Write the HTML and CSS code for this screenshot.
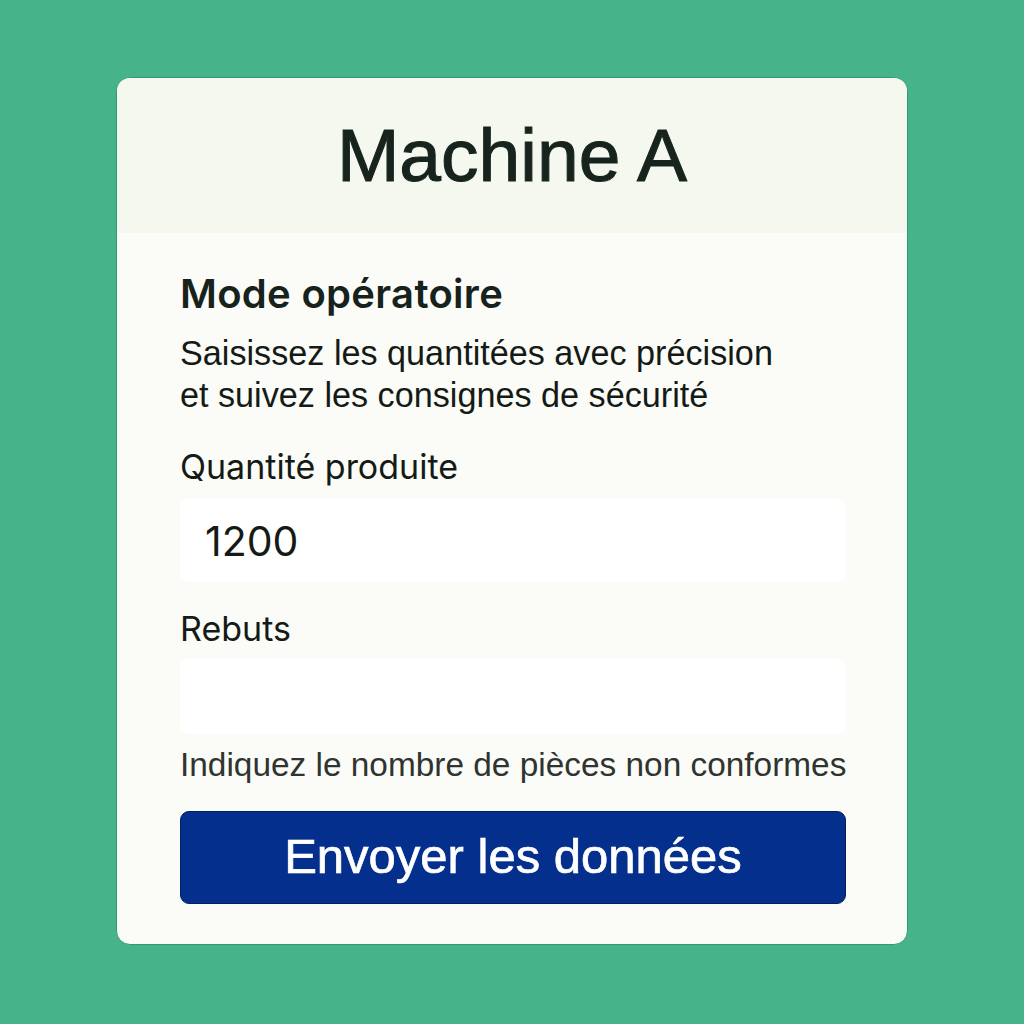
FILE: index.html
```html
<!DOCTYPE html>
<html lang="fr">
<head>
<meta charset="utf-8">
<title>Machine A</title>
<link rel="stylesheet" href="styles.css">
</head>
<body>
  <main class="card">
    <header class="card-header">
      <h1 class="title">Machine A</h1>
    </header>
    <form class="card-body">
      <h2 class="section-title">Mode opératoire</h2>
      <p class="intro">Saisissez les quantitées avec précision<br>et suivez les consignes de sécurité</p>
      <label class="label" for="qty">Quantité produite</label>
      <input class="field field-qty" id="qty" type="text" value="1200">
      <label class="label label-rebuts" for="rebuts">Rebuts</label>
      <input class="field field-rebuts" id="rebuts" type="text" value="">
      <p class="hint">Indiquez le nombre de pièces non conformes</p>
      <button class="submit" type="button">Envoyer les données</button>
    </form>
  </main>
</body>
</html>
```
FILE: styles.css
```css
* { box-sizing: border-box; }

html, body { height: 100%; }

body {
  margin: 0;
  background: #46b38a;
  display: flex;
  align-items: center;
  justify-content: center;
  font-family: "Liberation Sans", Arial, sans-serif;
  color: #16211b;
}

.card {
  width: 792px;
  height: 868px;
  margin-top: -2px;
  background: #fbfcf7;
  border: 1px solid #2a9e6e;
  border-radius: 14px;
  overflow: hidden;
  display: flex;
  flex-direction: column;
}

.card-header {
  height: 155px;
  background: #f5f8ef;
  display: flex;
  align-items: center;
  justify-content: center;
}

.title {
  margin: 0;
  font-size: 75px;
  font-weight: 400;
  line-height: 1;
  color: #17241d;
  -webkit-text-stroke: 1.1px #17241d;
  padding-top: 0;
}

.card-body {
  display: flex;
  flex-direction: column;
  padding: 39px 61px 0 63px;
}

.section-title {
  margin: 0;
  font-family: Inter, "Liberation Sans", sans-serif;
  font-size: 40px;
  font-weight: 600;
  line-height: 44px;
  letter-spacing: 0.3px;
  color: #17221c;
}

.intro {
  margin: 16px 0 0;
  font-size: 34.2px;
  line-height: 42px;
  color: #141a16;
}

.label {
  margin-top: 31px;
  font-family: Inter, "Liberation Sans", sans-serif;
  font-size: 34px;
  line-height: 40px;
  color: #141a16;
}

.label-rebuts { margin-top: 27px; }

.field {
  margin-top: 12px;
  width: 100%;
  border: none;
  border-radius: 7px;
  background: #ffffff;
  outline: none;
  font-family: Inter, "Liberation Sans", sans-serif;
  color: #141a16;
}

.field-qty {
  height: 83px;
  padding: 0 0 0 25px;
  font-size: 41px;
}

.field-rebuts {
  margin-top: 10px;
  height: 75px;
}

.hint {
  margin: 13px 0 0;
  font-size: 33.4px;
  line-height: 36px;
  color: #2f3431;
  white-space: nowrap;
}

.submit {
  margin-top: 28px;
  height: 93px;
  width: 100%;
  background: #052f8c;
  border: 1px solid #02205f;
  border-radius: 9px;
  color: #ffffff;
  font-family: "Liberation Sans", Arial, sans-serif;
  font-size: 49px;
  line-height: 1;
  -webkit-text-stroke: 0.7px #ffffff;
  padding: 0 0 2px;
  cursor: pointer;
}
```
